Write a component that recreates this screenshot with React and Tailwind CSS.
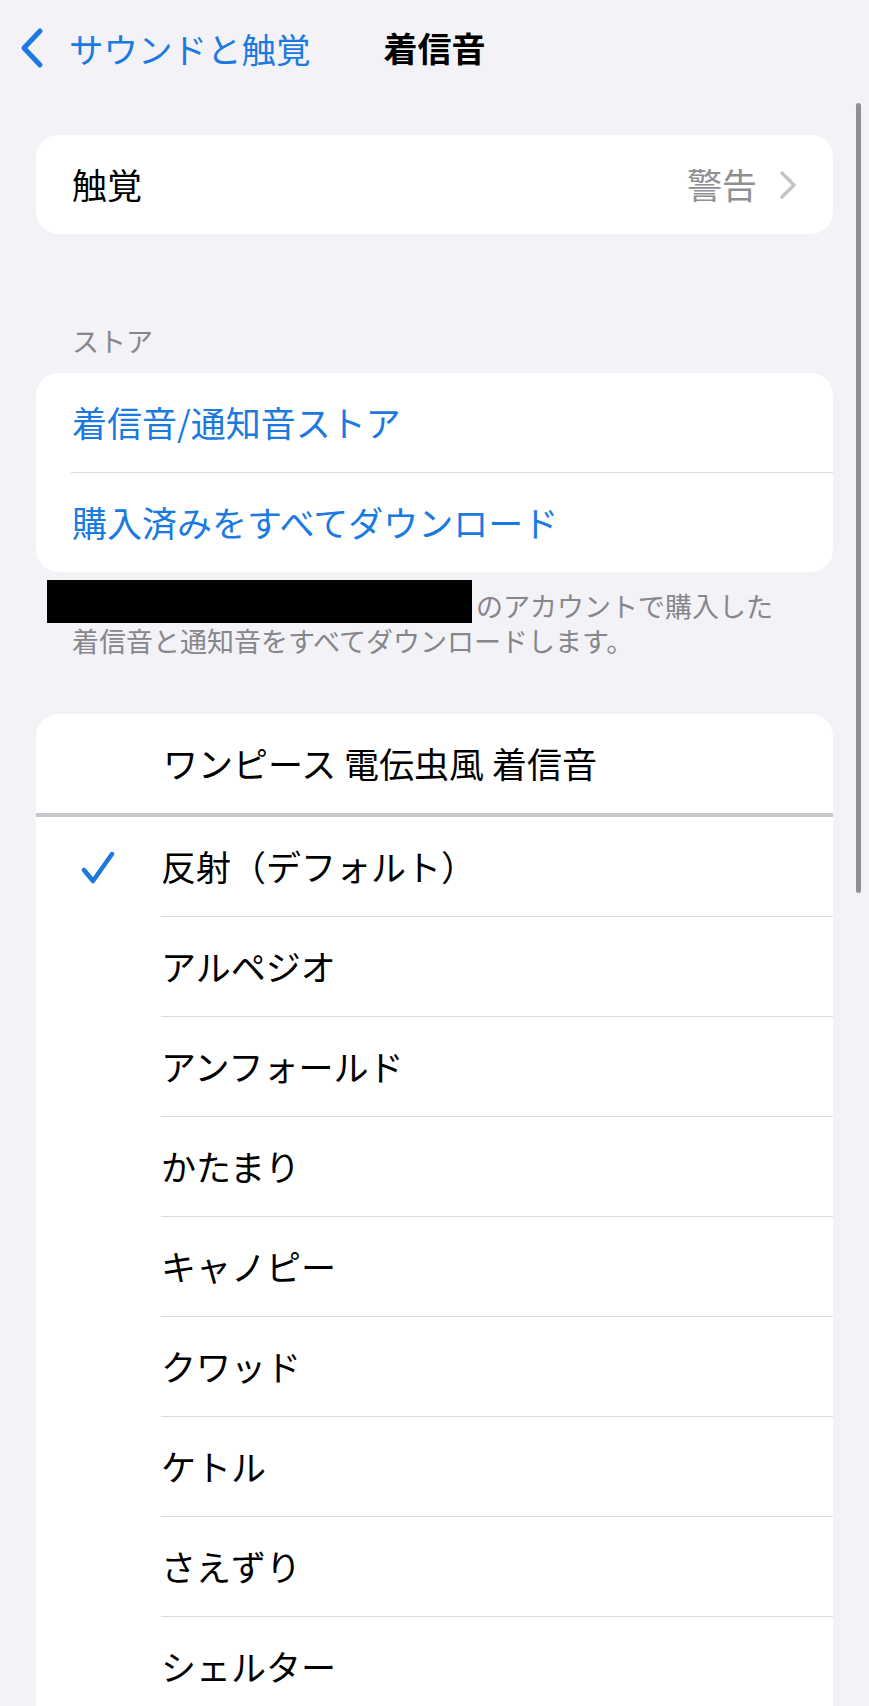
import { Fragment } from "react";

const ringtones = [
  "反射（デフォルト）",
  "アルペジオ",
  "アンフォールド",
  "かたまり",
  "キャノピー",
  "クワッド",
  "ケトル",
  "さえずり",
  "シェルター",
];

const font = {
  fontFamily: '"Noto Sans CJK JP", "Noto Sans", sans-serif',
};

function BackChevron() {
  return (
    <svg width="26" height="42" viewBox="0 0 26 42" fill="none">
      <path
        d="M21 4 L5 21 L21 38"
        stroke="#1a7ae0"
        strokeWidth="5"
        strokeLinecap="round"
        strokeLinejoin="round"
      />
    </svg>
  );
}

function RowChevron() {
  return (
    <svg width="18" height="28" viewBox="0 0 18 28" fill="none">
      <path
        d="M3 2 L15 14 L3 26"
        stroke="#c4c4c7"
        strokeWidth="3.5"
        strokeLinecap="round"
        strokeLinejoin="round"
      />
    </svg>
  );
}

function Check() {
  return (
    <svg width="34" height="33" viewBox="0 0 34 33" fill="none">
      <path
        d="M3 19 L12 30 L31 3"
        stroke="#1a7ae0"
        strokeWidth="4.5"
        strokeLinecap="round"
        strokeLinejoin="round"
      />
    </svg>
  );
}

export default function App() {
  return (
    <div
      className="relative w-[869px] h-[1706px] overflow-hidden bg-[#f2f2f7] text-black"
      style={font}
    >
      {/* nav bar */}
      <div className="grid grid-cols-[1fr_auto_1fr] items-center h-[96px]">
        <div className="flex items-center pl-[19px] gap-[24px]">
          <BackChevron />
          <span className="text-[34.5px] leading-none text-[#1a7ae0]">
            サウンドと触覚
          </span>
        </div>
        <div className="text-[34px] font-bold leading-none">着信音</div>
        <div />
      </div>

      {/* haptics */}
      <div className="mt-[39px] mx-[36px] h-[99px] rounded-[22px] bg-white flex items-center pl-[36px] pr-[36px]">
        <span className="flex-1 text-[35px]">触覚</span>
        <span className="text-[35px] text-[#8e8e93] mr-[22px]">警告</span>
        <RowChevron />
      </div>

      {/* store */}
      <div className="mt-[89px] mb-[14px] pl-[72px] h-[36px] leading-[36px] text-[27px] text-[#86868b]">
        ストア
      </div>
      <div className="mx-[36px] rounded-[22px] bg-white">
        <div className="h-[99px] flex items-center pl-[36px] text-[35px] text-[#1a7ae0]">
          着信音/通知音ストア
        </div>
        <div className="ml-[35px] h-px bg-[#dcdce0]" />
        <div className="h-[99px] flex items-center pl-[36px] text-[35px] text-[#1a7ae0]">
          購入済みをすべてダウンロード
        </div>
      </div>
      <div className="mt-[8px] pl-[72px] text-[27px] text-[#86868b]">
        <div className="h-[43px] flex items-end">
          <span className="-ml-[25px] w-[425px] h-[43px] bg-black mr-[4px]" />
          <span className="leading-[35px]">のアカウントで購入した</span>
        </div>
        <div className="leading-[35px]">
          着信音と通知音をすべてダウンロードします。
        </div>
      </div>

      {/* ringtones */}
      <div className="mt-[56px] mx-[36px] rounded-t-[22px] bg-white">
        <div className="h-[99px] flex items-center pl-[127px] text-[35px]">
          ワンピース 電伝虫風 着信音
        </div>
        <div className="h-[4px] bg-[#c8c8cc]" />
        {ringtones.map((name, i) => (
          <Fragment key={name}>
            <div className="flex h-[100px]">
              <div className="w-[125px] flex items-center pl-[45px]">
                {i === 0 && <Check />}
              </div>
              <div className="flex-1 flex items-center border-b border-[#dcdce0] text-[35px]">
                {name}
              </div>
            </div>
          </Fragment>
        ))}
      </div>

      {/* scroll indicator */}
      <div className="absolute left-[856px] top-[103px] w-[5px] h-[790px] rounded-full bg-[#8e8e93]" />
    </div>
  );
}
